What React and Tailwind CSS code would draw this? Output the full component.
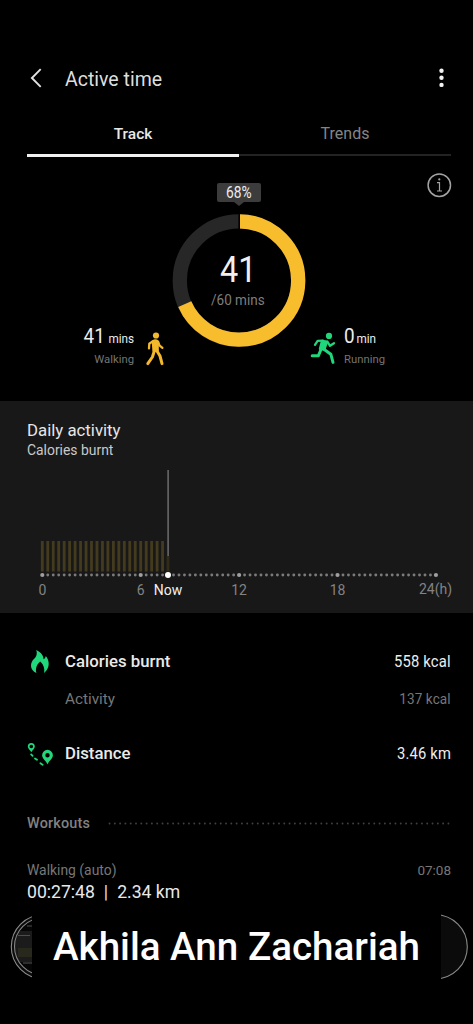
const STEP = 5.467;
const ticks = Array.from({ length: 73 }, (_, i) => i);
const hours = [
  { x: 42.5, label: '0' },
  { x: 140.7, label: '6' },
  { x: 239, label: '12' },
  { x: 337.5, label: '18' },
  { x: 435.5, label: '24(h)' },
];

const Header = () => (
  <header className="flex h-[114px] items-end justify-between pr-[27px] pb-[23px] pl-[27px]">
    <div className="flex h-6 items-center">
      <svg className="h-6 w-[38px]" viewBox="0 0 38 24" fill="none">
        <path d="M13.7 2.2 L4.9 11 L13.7 19.8" stroke="#e2e2e2" strokeWidth="1.9" />
      </svg>
      <h1 className="mt-px text-[19.5px] leading-6 text-[#dedede]">Active time</h1>
    </div>
    <svg className="h-6 w-5" viewBox="0 0 20 24" fill="#f2f2f2">
      <circle cx="15.5" cy="3.7" r="2.2" />
      <circle cx="15.5" cy="10.8" r="2.2" />
      <circle cx="15.5" cy="17.9" r="2.2" />
    </svg>
  </header>
);

const Tabs = () => (
  <nav className="ml-[27px] grid h-[43px] w-[424px] grid-cols-2 text-center text-[15.5px] leading-10">
    <button className="h-[43px] border-b-[3px] border-[#f0f0f0] pb-px font-medium text-[#e8e8e8]">
      Track
    </button>
    <button className="h-[42px] border-b-2 border-[#232323] pb-px text-[16px] text-[#858585]">
      Trends
    </button>
  </nav>
);

const WalkIcon = () => (
  <svg className="h-9 w-5" viewBox="0 0 20 36" fill="none" stroke="#f4b92b" strokeLinecap="round" strokeLinejoin="round">
    <circle cx="11" cy="4.5" r="3.1" fill="#f4b92b" stroke="none" />
    <path d="M7.6 10.2 Q10.6 8 12.8 10.2 L13 19.5 L8.3 20 Z" fill="#f4b92b" strokeWidth="1.8" />
    <path d="M7.6 10.4 L4.3 12.8 L4 17.4 M13.2 11 L14.4 14.4 L17.4 16.8" strokeWidth="2.3" />
    <path d="M9.3 20 L7.4 26 L2.8 32.6 M12 20 L15 25 L17 32.6" strokeWidth="3" />
  </svg>
);

const RunIcon = () => (
  <svg className="h-9 w-[27px]" viewBox="0 0 27 36" fill="none" stroke="#20d77c" strokeLinecap="round" strokeLinejoin="round">
    <circle cx="19" cy="6.9" r="3.1" fill="#20d77c" stroke="none" />
    <path d="M12 12 L17 12.6 L14.3 20.5 L10 19.8 Z" fill="#20d77c" strokeWidth="2.4" />
    <path d="M13 11.6 L7.6 11.8 L5 15.8 M17.5 12.8 L20 16.8 L24 14.2" strokeWidth="2.3" />
    <path d="M11 20.5 L8.3 26.8 L2.2 26.8 M13.6 20 L20.8 25.2 L23 33.4" strokeWidth="3" />
  </svg>
);

const Progress = () => (
  <section className="relative h-[244px]">
    <svg className="absolute top-[15px] left-[426px] h-[26px] w-[26px]" viewBox="0 0 26 26" fill="none" stroke="#a3a3a3">
      <circle cx="13.3" cy="13.2" r="11.2" strokeWidth="1.5" />
      <path d="M11 10.6 H13.5 V19 M11 19 H16" strokeWidth="1.2" />
      <circle cx="13.3" cy="7.4" r="1.1" fill="#a3a3a3" stroke="none" />
    </svg>
    <div className="absolute top-[26px] left-[217px] flex h-[19px] w-[44px] items-center justify-center rounded-[2px] bg-[#3c3c3c]">
      <span className="scale-x-[0.86] text-[16px] text-[#ececec]">68%</span>
      <svg className="absolute top-[19px] left-[17px] h-1 w-[10px]" viewBox="0 0 10 4">
        <path d="M0 0 H10 L5 4 Z" fill="#3c3c3c" />
      </svg>
    </div>
    <svg className="absolute top-[56px] left-[171px] h-[136px] w-[136px]" viewBox="0 0 136 136" fill="none" strokeWidth="14.3">
      <circle cx="68" cy="67.5" r="59.2" stroke="#272727" />
      <circle cx="68" cy="67.5" r="59.2" stroke="#f8bd2d" pathLength="100" strokeDasharray="68.3 100" transform="rotate(-89.5 68 67.5)" />
      <path d="M68.2 0 V16" stroke="#000" strokeWidth="1.6" />
    </svg>
    <div className="absolute top-[94px] left-[188px] flex w-[100px] flex-col items-center">
      <span className="h-[39px] scale-x-[0.9] text-[36px] leading-[39px] text-[#f0f0f0]">41</span>
      <span className="mt-px h-[18px] scale-x-[0.9] text-[15px] leading-[18px] text-[#7e7e7e]">/60 mins</span>
    </div>
    <div className="absolute top-[167px] left-[34px] flex w-[131px] items-start justify-end gap-[11px]">
      <div className="flex flex-col items-end">
        <div className="flex origin-right scale-x-[0.9] items-baseline gap-[4px] leading-6 text-[#ededed]">
          <span className="text-[21px]">41</span>
          <span className="text-[13px]">mins</span>
        </div>
        <span className="text-[11.3px] leading-[17px] text-[#747474]">Walking</span>
      </div>
      <div className="mt-[7px]"><WalkIcon /></div>
    </div>
    <div className="absolute top-[167px] left-[310px] flex items-start gap-[7px]">
      <div className="mt-[5px]"><RunIcon /></div>
      <div className="flex flex-col">
        <div className="flex origin-left scale-x-[0.9] items-baseline gap-[2px] leading-6 text-[#ededed]">
          <span className="text-[21px]">0</span>
          <span className="text-[13px]">min</span>
        </div>
        <span className="text-[11.3px] leading-[17px] text-[#747474]">Running</span>
      </div>
    </div>
  </section>
);

const DailyActivity = () => (
  <section className="h-[212px] bg-[#181818] pt-[19px]">
    <h2 className="ml-[27px] text-[16.8px] leading-5 text-[#e6e6e6]">Daily activity</h2>
    <p className="ml-[27px] h-[19px] text-[13.9px] leading-5 text-[#c9c9c9]">Calories burnt</p>
    <svg className="block h-[150px] w-full" viewBox="0 459 473 150">
      {ticks.slice(0, 23).map((i) => (
        <rect key={i} x={40.9 + i * STEP} y="541" width="2.8" height="30.5" fill="#443b1e" />
      ))}
      <rect x="166.6" y="556" width="2.8" height="15.5" fill="#322b18" />
      <path d="M168.1 470 V556" stroke="#747474" strokeWidth="1.4" />
      {ticks.map((i) => (
        <circle key={i} cx={42.3 + i * STEP} cy="575" r={i % 18 === 0 ? 2.1 : 1.45} fill={i % 18 === 0 ? '#a0a0a0' : '#7b7b7b'} />
      ))}
      <circle cx="168" cy="575" r="3" fill="#fff" />
      <g fontSize="14" fill="#838383" textAnchor="middle">
        {hours.map((h) => (
          <text key={h.label} x={h.x} y={h.label === '24(h)' ? 594 : 595}>{h.label}</text>
        ))}
        <text x="168" y="595" fill="#f0f0f0">Now</text>
      </g>
    </svg>
  </section>
);

const FlameIcon = () => (
  <svg className="h-[26px] w-[27px]" viewBox="0 0 27 26">
    <path
      d="M9.2 1 C14.3 3.5 16.6 6.7 16.5 10.2 C17.7 9.7 18.6 8.4 18.8 7 C22.5 11.5 23.5 18.5 17 24 C18.2 19 15.8 14.8 13.2 12.5 C10.4 14.8 8 19 9.4 24 C2.5 21 2.8 13.6 7.2 9.8 C9.2 7.8 10.6 5 9.2 1 Z"
      fill="#20d77c"
    />
  </svg>
);

const RouteIcon = () => (
  <svg className="h-[26px] w-[27px]" viewBox="0 0 27 26" fill="#20d77c">
    <path fillRule="evenodd" d="M4.3 2 A3.5 3.5 0 0 1 7.8 5.5 C7.8 7.8 5.3 9 4.3 11.2 C3.3 9 .8 7.8 .8 5.5 A3.5 3.5 0 0 1 4.3 2 Z M4.3 3.7 A1.8 1.8 0 1 0 4.3 7.3 A1.8 1.8 0 1 0 4.3 3.7 Z" />
    <path fillRule="evenodd" d="M20.5 8.8 A5.4 5.4 0 0 1 25.9 14.2 C25.9 17.8 21.5 20 20.5 23.5 C19.5 20 15.1 17.8 15.1 14.2 A5.4 5.4 0 0 1 20.5 8.8 Z M20.5 12 A2.2 2.2 0 1 0 20.5 16.4 A2.2 2.2 0 1 0 20.5 12 Z" />
    <path d="M4.2 13.4 L5.6 14.8 M8 17.5 L10 18.8 M13.4 22.3 L15.6 23.7" fill="none" stroke="#20d77c" strokeWidth="1.8" strokeLinecap="round" />
  </svg>
);

const Stats = () => (
  <section className="h-[181px] pt-[35px] pr-[22px] pl-[27px]">
    <div className="flex h-7 items-center">
      <FlameIcon />
      <span className="ml-[11px] text-[16.8px] font-medium text-[#eaeaea]">Calories burnt</span>
      <span className="ml-auto origin-right scale-x-[0.89] text-[16.6px] tracking-[0.2px] text-[#ededed]">558 kcal</span>
    </div>
    <div className="mt-[9px] flex h-7 items-center pl-[38px] text-[#777]">
      <span className="text-[15.3px]">Activity</span>
      <span className="ml-auto origin-right scale-x-[0.89] text-[15.2px] tracking-[0.1px]">137 kcal</span>
    </div>
    <div className="mt-[27px] flex h-7 items-center">
      <RouteIcon />
      <span className="ml-[11px] text-[16.8px] font-medium text-[#eaeaea]">Distance</span>
      <span className="ml-auto origin-right scale-x-[0.9] text-[16.4px] tracking-[0.2px] text-[#ededed]">3.46 km</span>
    </div>
  </section>
);

const Workouts = () => (
  <section className="h-[116px] pt-[20px] pr-[22px] pl-[27px]">
    <div className="flex h-5 items-center">
      <h2 className="w-[81px] text-[14.4px] font-medium tracking-[0.2px] text-[#828282]">Workouts</h2>
      <svg className="h-2 w-[345px]" viewBox="0 0 345 8">
        <path d="M1.5 3.5 H344" stroke="#404040" strokeWidth="1.8" strokeLinecap="round" strokeDasharray="0.1 5.22" />
      </svg>
    </div>
    <div className="mt-[26px] flex h-5 items-center justify-between text-[#777]">
      <span className="text-[13.9px]">Walking (auto)</span>
      <span className="text-[13.5px]">07:08</span>
    </div>
    <div className="mt-px flex h-[23px] items-center text-[17.6px] text-[#e8e8e8]">
      <span>00:27:48</span>
      <span className="mx-[9px]">|</span>
      <span>2.34 km</span>
    </div>
  </section>
);

const NameBar = () => (
  <footer className="relative h-[114px]">
    <svg className="absolute top-0 left-0 h-[74px] w-[473px]" viewBox="0 910 473 74" fill="none">
      <defs>
        <clipPath id="thumb"><circle cx="43" cy="946.5" r="28" /></clipPath>
      </defs>
      <rect x="11.3" y="914.7" width="456" height="64" rx="32" fill="#0b0b0b" stroke="#8b8b8b" strokeWidth="1.1" />
      <g clipPath="url(#thumb)">
        <rect x="12" y="915" width="24" height="64" fill="#060606" />
        <rect x="12" y="931" width="24" height="31" fill="#1b1b1b" />
        <rect x="18" y="948" width="16" height="9" fill="#29281c" />
        <path d="M18 935.5 H30 M27 926 H32" stroke="#4d4d4d" strokeWidth="1" />
        <path d="M23 963 H32" stroke="#555" strokeWidth="1" />
      </g>
      <circle cx="43" cy="946.5" r="28.5" stroke="#858585" strokeWidth="1.1" />
    </svg>
    <div className="absolute top-0 left-8 flex h-[74px] w-[409px] items-center justify-center bg-black">
      <span className="text-[38.6px] font-medium whitespace-nowrap text-white">Akhila Ann Zachariah</span>
    </div>
  </footer>
);

export default function App() {
  return (
    <main className="h-[1024px] w-[473px] overflow-hidden bg-black font-['Roboto',sans-serif] whitespace-nowrap">
      <Header />
      <Tabs />
      <Progress />
      <DailyActivity />
      <Stats />
      <Workouts />
      <NameBar />
    </main>
  );
}
